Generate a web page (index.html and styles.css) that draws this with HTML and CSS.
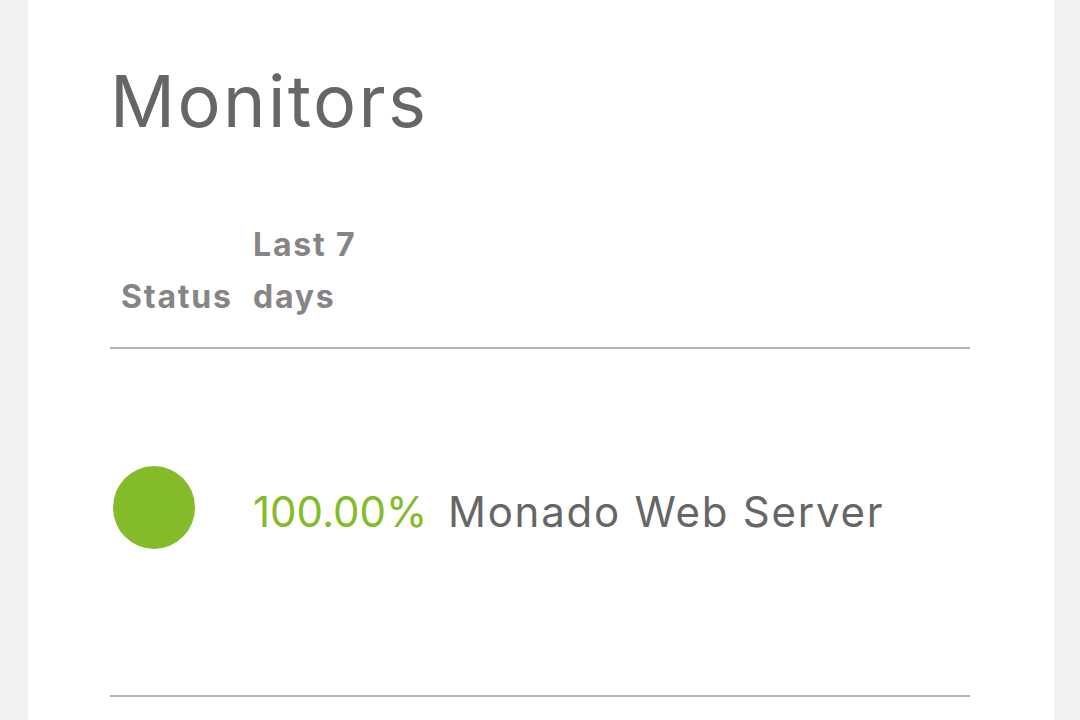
FILE: index.html
```
<!DOCTYPE html>
<html>
<head>
<meta charset="utf-8">
<link rel="stylesheet" href="styles.css">
</head>
<body>
<main class="card">
  <h1 class="title">Monitors</h1>
  <div class="table">
    <div class="head">
      <div class="th th-status">Status</div>
      <div class="th th-days">Last 7<br>days</div>
      <div class="th"></div>
    </div>
    <div class="row">
      <div class="cell cell-status"><span class="dot"></span></div>
      <div class="cell cell-uptime">100.00%</div>
      <div class="cell cell-name">Monado Web Server</div>
    </div>
  </div>
</main>
</body>
</html>
```
FILE: styles.css
```
html, body {
  margin: 0;
  padding: 0;
  background: #f1f1f1;
}
body {
  font-family: Inter, "Open Sans", sans-serif;
  color: #666666;
}
.card {
  background: #ffffff;
  margin: 0 26px 0 28px;
  min-height: 720px;
  padding: 65px 84px 0 82px;
  box-sizing: border-box;
}
.title {
  margin: 0;
  font-size: 72px;
  line-height: 72px;
  font-weight: 400;
  letter-spacing: 2.4px;
  color: #666666;
}
.head, .row {
  display: grid;
  grid-template-columns: 143px 195px 1fr;
  border-bottom: 2px solid #b3b3b3;
}
.head {
  margin-top: 82px;
  padding-bottom: 24px;
  align-items: end;
}
.th {
  font-size: 32px;
  line-height: 52px;
  font-weight: 700;
  letter-spacing: 1.8px;
  color: #858585;
}
.th-status {
  padding-left: 11px;
}
.row {
  height: 348px;
  box-sizing: border-box;
  align-items: start;
}
.cell-status {
  padding: 117px 0 0 3px;
}
.dot {
  display: block;
  width: 82px;
  height: 83px;
  border-radius: 50%;
  background: #84bb29;
}
.cell-uptime, .cell-name {
  padding-top: 142px;
  font-size: 42px;
  line-height: 42px;
}
.cell-uptime {
  color: #84bb29;
}
.cell-name {
  color: #666666;
  letter-spacing: 1.75px;
}
```
